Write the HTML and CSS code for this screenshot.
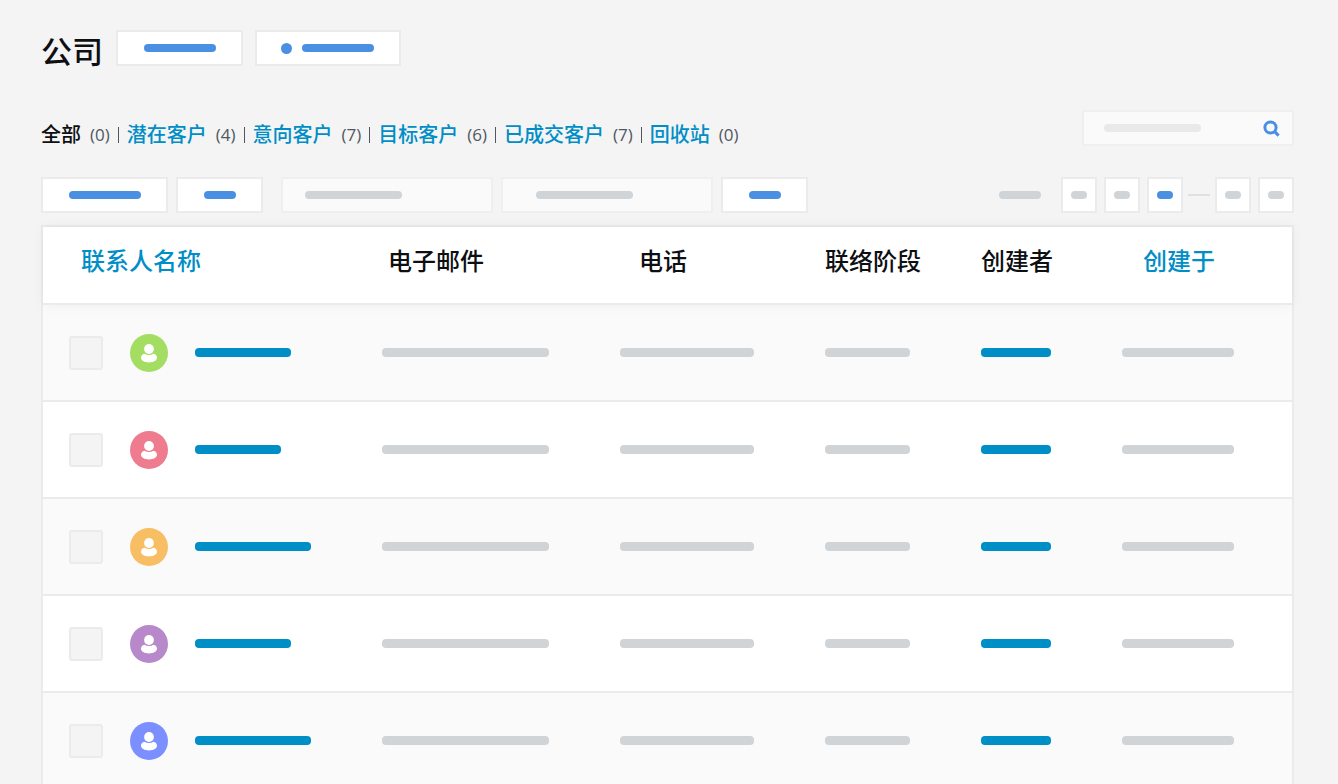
FILE: index.html
```html
<!DOCTYPE html>
<html lang="zh-CN">
<head>
  <meta charset="UTF-8" />
  <meta name="viewport" content="width=device-width, initial-scale=1.0" />
  <title>公司</title>
  <link rel="stylesheet" href="styles.css">
</head>
<body>
  <svg class="sprite" aria-hidden="true">
    <symbol id="user" viewBox="0 0 38 38">
      <circle cx="19" cy="15" r="4.9" />
      <path d="M14.4 19.8Q19 22.4 23.6 19.8C25.8 20.4 27 22 27 23.7C27 26.4 23.5 28.4 19 28.4C14.5 28.4 11 26.4 11 23.7C11 22 12.2 20.4 14.4 19.8Z" />
    </symbol>
  </svg>

  <div class="page">
    <header class="header">
      <h1>公司</h1>
      <button class="btn" type="button"><span class="bar w72"></span></button>
      <button class="btn with-dot" type="button"><span class="dot"></span><span class="bar w72"></span></button>
    </header>

    <div class="subheader">
      <ul class="filters">
        <li><a class="current" href="#">全部</a><span class="count">(0)</span></li>
        <li><a href="#">潜在客户</a><span class="count">(4)</span></li>
        <li><a href="#">意向客户</a><span class="count">(7)</span></li>
        <li><a href="#">目标客户</a><span class="count">(6)</span></li>
        <li><a href="#">已成交客户</a><span class="count">(7)</span></li>
        <li><a href="#">回收站</a><span class="count">(0)</span></li>
      </ul>
      <label class="field search">
        <span class="bar w97"></span>
        <input type="search">
        <svg class="search-icon" viewBox="0 0 17 17">
          <circle cx="7.5" cy="7.5" r="5.6" />
          <path d="M11.4 11.4L15.6 15.6" />
        </svg>
      </label>
    </div>

    <div class="toolbar">
      <div class="actions">
        <button class="btn" type="button"><span class="bar w72"></span></button>
        <button class="btn" type="button"><span class="bar w32"></span></button>
        <label class="field first"><span class="bar w97"></span><input type="text"></label>
        <label class="field wide"><span class="bar w97"></span><input type="text"></label>
        <button class="btn" type="button"><span class="bar w32"></span></button>
      </div>
      <nav class="pagination">
        <span class="bar total"></span>
        <button class="page-btn" type="button"><span class="bar"></span></button>
        <button class="page-btn" type="button"><span class="bar"></span></button>
        <button class="page-btn active" type="button"><span class="bar"></span></button>
        <span class="dash"></span>
        <button class="page-btn" type="button"><span class="bar"></span></button>
        <button class="page-btn" type="button"><span class="bar"></span></button>
      </nav>
    </div>

    <table class="contacts">
      <colgroup>
        <col class="col-name">
        <col class="col-email">
        <col class="col-phone">
        <col class="col-stage">
        <col class="col-owner">
        <col class="col-date">
      </colgroup>
      <thead>
        <tr>
          <th class="th-name"><a href="#">联系人名称</a></th>
          <th class="th-email">电子邮件</th>
          <th class="th-phone">电话</th>
          <th>联络阶段</th>
          <th>创建者</th>
          <th class="th-date"><a href="#">创建于</a></th>
        </tr>
      </thead>
      <tbody>
        <tr>
          <td>
            <div class="person">
              <input type="checkbox">
              <svg class="avatar green"><use href="#user" /></svg>
              <a class="line link w96" href="#"></a>
            </div>
          </td>
          <td><span class="line w167"></span></td>
          <td><span class="line w134"></span></td>
          <td><span class="line w85"></span></td>
          <td><a class="line link w70" href="#"></a></td>
          <td><span class="line w112"></span></td>
        </tr>
        <tr>
          <td>
            <div class="person">
              <input type="checkbox">
              <svg class="avatar red"><use href="#user" /></svg>
              <a class="line link w86" href="#"></a>
            </div>
          </td>
          <td><span class="line w167"></span></td>
          <td><span class="line w134"></span></td>
          <td><span class="line w85"></span></td>
          <td><a class="line link w70" href="#"></a></td>
          <td><span class="line w112"></span></td>
        </tr>
        <tr>
          <td>
            <div class="person">
              <input type="checkbox">
              <svg class="avatar orange"><use href="#user" /></svg>
              <a class="line link w116" href="#"></a>
            </div>
          </td>
          <td><span class="line w167"></span></td>
          <td><span class="line w134"></span></td>
          <td><span class="line w85"></span></td>
          <td><a class="line link w70" href="#"></a></td>
          <td><span class="line w112"></span></td>
        </tr>
        <tr>
          <td>
            <div class="person">
              <input type="checkbox">
              <svg class="avatar purple"><use href="#user" /></svg>
              <a class="line link w96" href="#"></a>
            </div>
          </td>
          <td><span class="line w167"></span></td>
          <td><span class="line w134"></span></td>
          <td><span class="line w85"></span></td>
          <td><a class="line link w70" href="#"></a></td>
          <td><span class="line w112"></span></td>
        </tr>
        <tr>
          <td>
            <div class="person">
              <input type="checkbox">
              <svg class="avatar blue"><use href="#user" /></svg>
              <a class="line link w116" href="#"></a>
            </div>
          </td>
          <td><span class="line w167"></span></td>
          <td><span class="line w134"></span></td>
          <td><span class="line w85"></span></td>
          <td><a class="line link w70" href="#"></a></td>
          <td><span class="line w112"></span></td>
        </tr>
      </tbody>
    </table>
  </div>
</body>
</html>
```

FILE: styles.css
```css
* {
  box-sizing: border-box;
}
body {
  margin: 0;
  background: #f4f4f4;
  color: #0d0f12;
  font-family: "Open Sans", "Noto Sans CJK SC", sans-serif;
}
a {
  color: #008ec6;
  text-decoration: none;
}
.sprite {
  display: none;
}
.page {
  height: 100vh;
  overflow: hidden;
  padding: 30px 44px 0 41px;
}

/* placeholders */
.bar {
  display: block;
  height: 8px;
  border-radius: 4px;
  background: #d0d4d7;
}
.line {
  display: block;
  height: 9px;
  border-radius: 4px;
  background: #d0d4d7;
}
.line.link {
  background: #008ec6;
}
.w32 { width: 32px; }
.w70 { width: 70px; }
.w72 { width: 72px; }
.w85 { width: 85px; }
.w86 { width: 86px; }
.w96 { width: 96px; }
.w97 { width: 97px; }
.w112 { width: 112px; }
.w116 { width: 116px; }
.w134 { width: 134px; }
.w167 { width: 167px; }

/* buttons and fields */
.btn {
  display: flex;
  align-items: center;
  gap: 10px;
  height: 36px;
  padding: 0 25px 0 26px;
  border: 2px solid #ebebeb;
  background: #fff;
  cursor: pointer;
}
.btn.with-dot {
  padding-left: 24px;
}
.btn .bar,
.dot {
  background: #4a90e2;
}
.dot {
  width: 11px;
  height: 11px;
  border-radius: 50%;
}
.field {
  display: flex;
  align-items: center;
  width: 212px;
  height: 36px;
  padding: 0 12px 0 22px;
  border: 2px solid #efefef;
  background: #fafafa;
}
.field.wide {
  padding-left: 33px;
}
.field .bar {
  flex: none;
}
.field input {
  flex: 1;
  min-width: 0;
  padding: 0;
  border: none;
  outline: none;
  background: transparent;
  appearance: none;
}

/* header */
.header {
  display: flex;
  gap: 12px;
}
h1 {
  margin: 0 1px 0 0;
  font-size: 31px;
  line-height: 42px;
  font-weight: 500;
}
.subheader {
  display: flex;
  justify-content: space-between;
  margin-top: 38px;
}
.filters {
  display: flex;
  margin: 0;
  padding: 0;
  list-style: none;
  font-size: 20px;
  line-height: 50px;
}
.filters li {
  display: flex;
  align-items: center;
}
.filters li + li::before {
  content: "";
  width: 1px;
  height: 16px;
  margin: 0 8px;
  background: #50575e;
}
.filters a {
  font-weight: 500;
}
.filters .current {
  color: #0d0f12;
}
.count {
  margin-left: 9px;
  color: #50575e;
  font-size: 17px;
  font-weight: 400;
}
.field.search {
  padding-left: 20px;
}
.search .bar {
  background: #e9e9e9;
}
.search-icon {
  flex: none;
  width: 17px;
  height: 17px;
  fill: none;
  stroke: #4a90e2;
  stroke-width: 3;
}

/* toolbar */
.toolbar {
  display: flex;
  justify-content: space-between;
  margin-top: 17px;
}
.actions,
.pagination {
  display: flex;
  align-items: center;
  gap: 8px;
}
.actions .first {
  margin-left: 10px;
}
.pagination {
  gap: 7px;
}
.total {
  width: 42px;
  margin-right: 13px;
}
.page-btn {
  width: 36px;
  height: 36px;
  padding: 0 8px;
  border: 2px solid #ebebeb;
  background: #fff;
  cursor: pointer;
}
.page-btn.active .bar {
  background: #4a90e2;
}
.dash {
  width: 22px;
  height: 2px;
  margin: 0 -2px;
  background: #e0e0e0;
}

/* contacts table */
.contacts {
  width: 100%;
  margin-top: 12px;
  border: 2px solid #ebebeb;
  border-spacing: 0;
  table-layout: fixed;
}
.col-name { width: 339px; }
.col-email { width: 238px; }
.col-phone { width: 205px; }
.col-stage { width: 156px; }
.col-owner { width: 141px; }
.col-date { width: 170px; }
.contacts thead {
  position: relative;
  box-shadow: 0 0 12px rgba(0, 0, 0, 0.05);
}
.contacts th {
  height: 78px;
  padding: 0 0 8px;
  border-bottom: 2px solid #ebebeb;
  background: #fff;
  font-size: 24px;
  line-height: 36px;
  font-weight: 500;
  text-align: left;
}
.contacts .th-name { padding-left: 38px; }
.contacts .th-email { padding-left: 6px; }
.contacts .th-phone { padding-left: 19px; }
.contacts .th-date { padding-left: 21px; }
.contacts td {
  height: 97px;
  padding: 0;
  border-bottom: 2px solid #ebebeb;
  background: #fff;
}
.contacts tbody tr:nth-child(odd) td {
  background: #fafafa;
}
.person {
  display: flex;
  align-items: center;
  gap: 27px;
  padding-left: 26px;
}
.person input {
  width: 34px;
  height: 34px;
  margin: 0;
  border: 2px solid #ebebeb;
  border-radius: 3px;
  background: #f4f4f4;
  appearance: none;
}
.avatar {
  width: 38px;
  height: 38px;
  border-radius: 50%;
  fill: #fff;
}
.green { background: #a3de62; }
.red { background: #ef7b8e; }
.orange { background: #f7be64; }
.purple { background: #b788ca; }
.blue { background: #7b8fff; }
```
